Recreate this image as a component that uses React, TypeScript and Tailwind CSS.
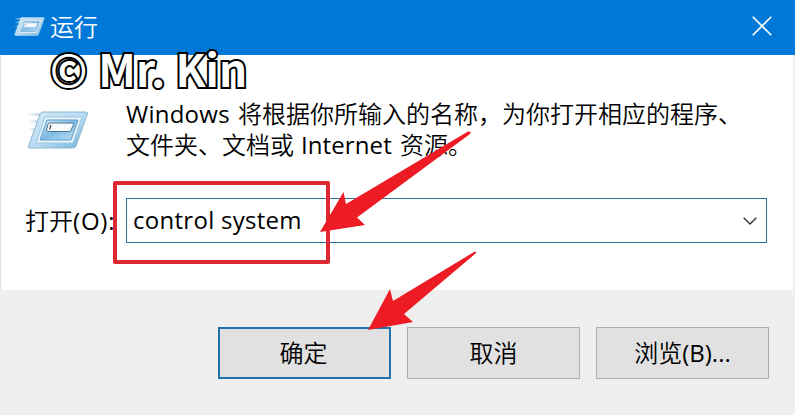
import React from "react";

const ui = "font-['Open_Sans','Noto_Sans_CJK_SC',sans-serif]";

function RunIcon({ className, small = false }: { className: string; small?: boolean }) {
  return (
    <svg className={className} viewBox="0 0 62 42" fill="none">
      <defs>
        <linearGradient id="frame" x1="0" y1="0" x2="1" y2="1">
          <stop offset="0" stopColor="#d3e9f7" />
          <stop offset="0.55" stopColor="#b5daf1" />
          <stop offset="1" stopColor="#6db1da" />
        </linearGradient>
        <linearGradient id="panel" x1="0" y1="0" x2="1" y2="1">
          <stop offset="0" stopColor="#d5ebf8" />
          <stop offset="0.5" stopColor="#7dbbe6" />
          <stop offset="1" stopColor="#c2e3f7" />
        </linearGradient>
        <linearGradient id="trail" x1="0" y1="0" x2="1" y2="0">
          <stop offset="0" stopColor="#bcd9ea" stopOpacity="0" />
          <stop offset="1" stopColor="#bcd9ea" />
        </linearGradient>
      </defs>
      <path d="M0 4h14v3H0zM2 11h12v3H2zM0 19h10v3H0zM1 27h7v3H1z" fill="url(#trail)" />
      <path d="M16 3h43q2 0 1.400 2L49 37q-1 2-3 2H3q-2 0-1.400-2L13 5q1-2 3-2z" fill="url(#frame)" stroke={small ? "#b6dcf2" : "#8fb6cf"} strokeWidth="1" />
      <path d="M18 8h37L46 34H9z" fill="#eaf5fb" stroke="#9cc6df" strokeWidth="1" />
      <path d="M20 11h31l-7 20H13z" fill="url(#panel)" stroke="#5e9bc4" strokeWidth="1" />
      <path d="M23 14h22q2 0 1.500 1.500L44 21q-.6 1.500-2 1.500H21q-2 0-1.500-1.500L21 15.500q.5-1.500 2-1.500z" fill="#f7fbfd" stroke={small ? "#9cc6df" : "#55758a"} strokeWidth="1" />
      <path d="M24 16l-1.500 4.500" stroke={small ? "#8a8fa8" : "#38495a"} strokeWidth="1.200" />
    </svg>
  );
}

function Button({ children, primary = false }: { children: React.ReactNode; primary?: boolean }) {
  return (
    <button
      className={`flex h-[52px] w-[173px] items-center justify-center bg-[#e1e1e1] pb-px text-[24px] font-[350] leading-none ${
        primary ? "border-2 border-[#2172ab] pr-[2px]" : "border border-[#adadad]"
      }`}
    >
      {children}
    </button>
  );
}

export default function App() {
  return (
    <div className={`relative flex h-[415px] w-[795px] flex-col overflow-hidden bg-[#efefef] text-black ${ui}`}>
      <header className="flex h-[55px] shrink-0 items-center bg-[#0078d7] pl-[14px] pr-[23px] text-white">
        <RunIcon small className="mb-[3px] h-[21px] w-[31px]" />
        <h1 className="mb-[2px] ml-[5px] text-[24px] font-[350] leading-none">运行</h1>
        <svg className="mb-[3px] ml-auto h-5 w-5" viewBox="0 0 20 20" stroke="#fff" strokeWidth="1.600">
          <path d="M.7.7l18.600 18.600M19.300.7L.7 19.300" />
        </svg>
      </header>

      <main className="mr-[2px] h-[235px] shrink-0 border-l border-[#e4e4e4] bg-white">
        <div className="flex pl-[26px] pt-[43px]">
          <RunIcon className="mt-[11px] h-[42px] w-[62px] shrink-0" />
          <div className="ml-[37px] whitespace-nowrap text-[24px] font-[350] leading-[31px]">
            <p className="flex h-[31px]">
              <span className="w-[112px] font-normal tracking-[0.25px]">Windows</span>
              <span>将根据你所输入的名称，为你打开相应的程序、</span>
            </p>
            <p className="flex h-[31px]">
              <span className="w-[175px]">文件夹、文档或</span>
              <span className="w-[99px] font-normal tracking-[0.1px]">Internet</span>
              <span>资源。</span>
            </p>
          </div>
        </div>
        <div className="flex items-center pl-[24px] pt-[38px]">
          <label className="flex w-[101px] whitespace-nowrap text-[24px] font-[350] leading-none">
            打开<span className="font-normal tracking-[0.8px]">(O):</span>
          </label>
          <div className="flex h-[45px] w-[641px] items-center border border-[#2d7198] bg-white pl-[6px] pr-[9px]">
            <span className="mb-px whitespace-nowrap text-[24px] leading-none tracking-[0.28px]">control system</span>
            <svg className="ml-auto h-2 w-[14px]" viewBox="0 0 14 8" fill="none" stroke="#333" strokeWidth="1.400">
              <path d="M.7.7L7 7l6.300-6.300" />
            </svg>
          </div>
        </div>
      </main>

      <footer className="flex gap-4 pl-[218px] pt-[37px]">
        <Button primary>确定</Button>
        <Button>取消</Button>
        <Button>
          浏览<span className="font-normal">(B)...</span>
        </Button>
      </footer>

      <div className="absolute left-[113px] top-[181px] h-[83px] w-[217px] rounded-[2px] border-4 border-[#dd2831]" />
      <svg className="absolute left-[320px] top-[131px] h-[112px] w-[160px]" viewBox="0 0 160 112">
        <path d="M0 101L23.500 61L26 73L148 .5Q152 0 150 3L37 86.500L45 94Z" fill="#ed1c24" />
      </svg>
      <svg className="absolute left-[368px] top-[251px] h-[80px] w-[110px]" viewBox="0 0 110 80">
        <path d="M0 79L22 38L25 50L106 1Q110 0 107 3L36 63L45 71Z" fill="#ed1c24" />
      </svg>
      <div className="absolute left-[50px] top-[51px] flex h-[34px] gap-[11px] whitespace-pre font-['Noto_Sans_CJK_SC',sans-serif] text-[44px] font-bold leading-[34px] text-white [-webkit-text-stroke:4px_black] [paint-order:stroke_fill]">
        <span>©</span>
        <span>Mr. Kin</span>
      </div>
    </div>
  );
}
